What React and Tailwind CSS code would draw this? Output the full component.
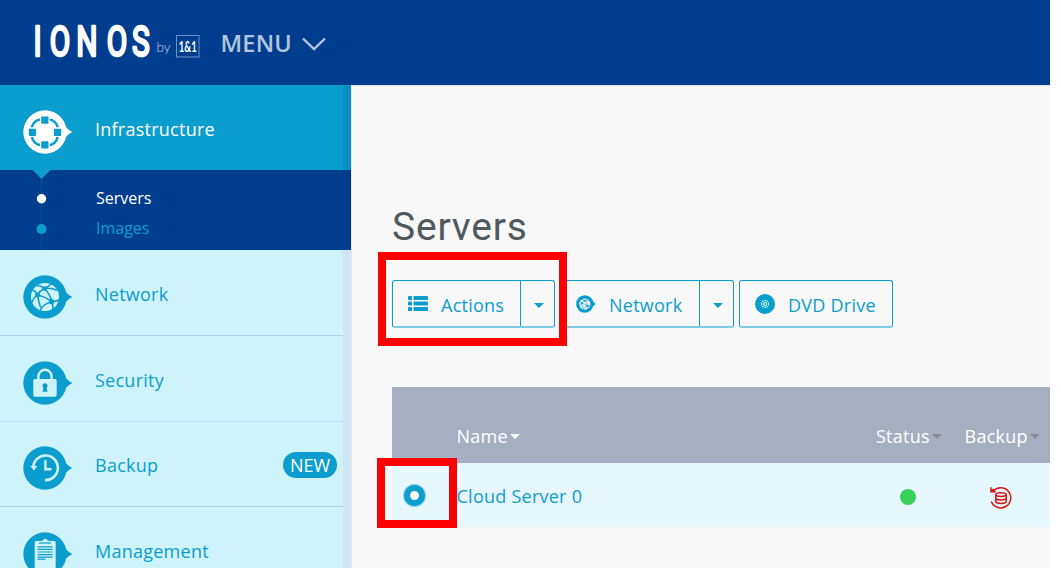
import React from "react";

const NAV = [
  { id: "network", label: "Network", icon: "globe", row: "h-[86px] border-[#a9d3ea]" },
  { id: "security", label: "Security", icon: "lock", row: "h-[86px] border-[#b8e0ee]" },
  { id: "backup", label: "Backup", icon: "history", badge: "NEW", row: "h-[85px] border-[#9fd2e8]", lift: "-mt-px" },
  { id: "management", label: "Management", icon: "clipboard", row: "h-[86px] border-[#a5d6ea]" },
];

function GlobeLines({ color }) {
  return (
    <>
      <circle cx="22" cy="22" r="14" fill="currentColor" />
      <g fill="none" stroke={color} strokeWidth="1.6" strokeLinecap="round">
        <path d="M14.5 20Q17 15.5 21.5 13.5 25.5 11.5 28 9M21.5 13.5Q17 10 13.5 10.5M21.5 13.5Q28 12.5 33.5 15" />
        <path d="M21.5 13.5Q27 19 28.7 26.7M14.5 20Q12.5 16 9.5 15M14.5 20Q9.5 24 9 27M14.5 20Q15.5 27 17.5 32" />
        <path d="M14.5 20Q22 21.5 28.7 26.7M28.7 26.7Q33 26.5 36 25M28.7 26.7Q20 29 17.5 35M28.7 26.7Q30.5 31 29.8 35" />
      </g>
      <g fill={color}>
        <circle cx="14.5" cy="20" r="2.5" />
        <circle cx="21.5" cy="13.5" r="2.3" />
        <circle cx="28.7" cy="26.7" r="2.6" />
      </g>
    </>
  );
}

function Glyph({ name }) {
  if (name === "infra") {
    return (
      <>
        <rect x="9" y="9.4" width="25.6" height="25.6" rx="9" fill="none" stroke="#0b9dcd" strokeWidth="2.5" />
        <path d="M21.8 5v34M5 22.2h34" stroke="white" strokeWidth="9.8" />
        <g fill="#0b9dcd">
          <rect x="18.2" y="6.4" width="7.3" height="7.3" rx="0.8" />
          <rect x="18.2" y="31.3" width="7.3" height="7.3" rx="0.8" />
          <rect x="5.8" y="18.8" width="7.3" height="7.3" rx="0.8" />
          <rect x="30.9" y="18.8" width="7.3" height="7.3" rx="0.8" />
        </g>
      </>
    );
  }
  if (name === "globe") {
    return (
      <g className="text-[#cef3fa]">
        <GlobeLines color="#0b9dcd" />
      </g>
    );
  }
  if (name === "lock") {
    return (
      <>
        <path d="M15.4 19v-3.6a6.6 6.6 0 0 1 13.2 0V19" fill="none" stroke="#cef3fa" strokeWidth="2.4" />
        <rect x="10.3" y="18" width="23.4" height="17.8" rx="1.8" fill="#cef3fa" />
        <circle cx="22" cy="24.8" r="2.5" fill="#0b9dcd" />
        <path d="M21 25h2.2l1.3 5.8h-4.9z" fill="#0b9dcd" />
      </>
    );
  }
  if (name === "history") {
    return (
      <>
        <path d="M10.3 21A12.3 12.3 0 1 1 22 34.1" fill="none" stroke="#cef3fa" strokeWidth="2.6" />
        <path d="M7.2 20h7.2l-3.4 4.6z" fill="#cef3fa" />
        <path d="M22.4 14.2v9h6" fill="none" stroke="#cef3fa" strokeWidth="2.4" />
      </>
    );
  }
  return (
    <>
      <rect x="11.7" y="9" width="21" height="29" rx="1.5" fill="#cef3fa" />
      <path d="M16 11h12" stroke="#0b9dcd" strokeWidth="1.2" />
      <path d="M17 9.5 20 8.3a2.3 2.3 0 0 1 4.4 0l3 1.2z" fill="#cef3fa" />
      <path d="M14.5 14.8h15M14.5 17.4h15M14.5 20h15M14.5 22.6h15M14.5 25.2h15M14.5 27.2h8" stroke="#0b9dcd" strokeWidth="1.2" />
    </>
  );
}

// round badge with the small pointer on its right side
function NavIcon({ name, light }) {
  return (
    <svg
      width="50"
      height="44"
      viewBox="0 0 50 44"
      className={light ? "shrink-0 text-white" : "shrink-0 text-[#0b9dcd]"}
    >
      <circle cx="22" cy="22" r="21.7" fill="currentColor" />
      <path d="M42 16.5Q46 20.5 49.3 22 46 23.5 42 27.5z" fill="currentColor" />
      <Glyph name={name} />
    </svg>
  );
}

function Logo() {
  return (
    <svg width="170" height="50" viewBox="34 20 170 50" className="shrink-0 overflow-visible">
      <g
        transform="scale(0.7 1)"
        fill="white"
        stroke="white"
        strokeWidth="2.7"
        strokeLinejoin="round"
        fontFamily="Roboto, sans-serif"
        fontWeight="400"
        fontSize="42.5"
      >
        <text x="47.8 71 109 152.5 188.5" y="56.5">IONOS</text>
      </g>
      <text x="156.5" y="51.5" fill="#c3d2e6" fontFamily="Lato, sans-serif" fontWeight="300" fontSize="13.5">by</text>
      <rect x="176.5" y="35.5" width="22.5" height="21.5" fill="none" stroke="#6b93c4" />
      <text x="178.7" y="51.7" fill="white" fontFamily="Lato, sans-serif" fontWeight="700" fontSize="14.5" textLength="18" lengthAdjust="spacingAndGlyphs">1&amp;1</text>
    </svg>
  );
}

function Header() {
  return (
    <header className="h-[85px] shrink-0 bg-[#003d8f] flex pl-[34px] pt-5">
      <Logo />
      <div className="flex items-start ml-[16.5px] text-[#b2c5dd]">
        <span className="text-[23.5px] leading-[46px] font-semibold tracking-[0.2px] w-[80px]">MENU</span>
        <svg width="26" height="16" viewBox="0 0 26 16" className="mt-4">
          <path d="M2 2.5 13 13 24 2.5" fill="none" stroke="currentColor" strokeWidth="2.4" />
        </svg>
      </div>
    </header>
  );
}

function Sidebar() {
  return (
    <aside className="relative w-[351px] shrink-0 bg-[#cef3fa] text-[18px] tracking-[0.25px] text-[#0b9dcd] overflow-hidden">
      <div className="h-[85px] bg-[#0b9dcd] text-white flex items-start pl-[22.5px]">
        <div className="pt-[25px]">
          <NavIcon name="infra" light />
        </div>
        <span className="ml-[22.5px] leading-[88px]">Infrastructure</span>
      </div>

      <div className="relative z-10 h-20 bg-[#003d8f] flex text-base tracking-normal">
        <svg width="96" height="80" viewBox="0 0 96 80" className="shrink-0">
          <path d="M41.5 8v72" stroke="#0d4f8c" />
          <path d="M32.5 0h18L41.5 9z" fill="#0b9dcd" />
          <circle cx="41.5" cy="28.7" r="4.7" fill="white" />
          <circle cx="41.5" cy="59" r="5" fill="#0b9dcd" />
        </svg>
        <div className="flex flex-col pt-[13px] leading-[30px]">
          <span className="text-white">Servers</span>
          <span>Images</span>
        </div>
      </div>

      {NAV.map((item) => (
        <div key={item.id} className={`flex items-start pl-[22.5px] border-b ${item.row}`}>
          <div className={`flex flex-1 items-start ${item.lift ?? ""}`}>
            <div className="pt-[25px]">
              <NavIcon name={item.icon} />
            </div>
            <span className="ml-[22.5px] leading-[88px]">{item.label}</span>
            {item.badge && (
              <span className="ml-auto mr-3.5 mt-[31px] w-[54px] h-[26px] rounded-full bg-[#0b9dcd] text-white text-center leading-[27px] tracking-normal">
                {item.badge}
              </span>
            )}
          </div>
        </div>
      ))}

      {/* scrollbar gutter */}
      <div className="absolute right-0 inset-y-0 w-2">
        <div className="h-[85px] bg-[#0a8fc5]" />
        <div className="h-20" />
        <div className="h-[324px] bg-[#cfe5f3]" />
      </div>
    </aside>
  );
}

function Caret({ className }) {
  return (
    <svg width="10" height="5" viewBox="0 0 10 5" className={className}>
      <path d="M0 0h10L5 5z" fill="currentColor" />
    </svg>
  );
}

function ListIcon() {
  return (
    <svg width="20" height="15" viewBox="0 0 20 15" className="shrink-0" fill="currentColor">
      {[0, 5.5, 11].map((y) => (
        <g key={y}>
          <rect x="0" y={y} width="4" height="4" rx="0.8" />
          <rect x="5.5" y={y} width="14.5" height="4" rx="0.8" />
        </g>
      ))}
    </svg>
  );
}

function SmallGlobe() {
  return (
    <svg width="20" height="18" viewBox="0 0 50 44" className="shrink-0">
      <circle cx="22" cy="22" r="21.7" fill="#0b9dcd" />
      <path d="M41 15 49.5 22 41 29z" fill="#0b9dcd" />
      <g className="text-[#f8f8f8]">
        <GlobeLines color="#0b9dcd" />
      </g>
    </svg>
  );
}

function DiscIcon() {
  return (
    <svg width="20" height="20" viewBox="0 0 20 20" className="shrink-0">
      <circle cx="10" cy="10" r="10" fill="#0b9dcd" />
      <circle cx="10" cy="10" r="3.6" fill="none" stroke="#d5eef6" strokeWidth="0.9" />
      <circle cx="10" cy="10" r="1.5" fill="none" stroke="white" strokeWidth="1" />
    </svg>
  );
}

function ToolButton({ icon, label, width, split }) {
  return (
    <div className="flex h-12 border border-b-2 border-[#0b9dcd] border-b-[#7fcce3] rounded-[3px] text-[18px] tracking-[0.25px] text-[#0b9dcd]">
      <button className={`flex items-center gap-[13px] pl-[15px] ${width}`}>
        {icon}
        <span className="pt-[3px]">{label}</span>
      </button>
      {split && (
        <button className="w-[34px] border-l border-[#0b9dcd] flex items-center justify-center">
          <Caret className="mt-1 ml-0.5" />
        </button>
      )}
    </div>
  );
}

function BackupIcon() {
  return (
    <svg width="22" height="23" viewBox="0 0 22 23" fill="none" stroke="#d6140f" strokeWidth="1.5">
      <path d="M3.2 5A10.1 10.1 0 1 1 1.3 15.5" />
      <path d="M1 1.2v4.6h4.8M1 5.6 3.8 3" />
      <ellipse cx="11" cy="8.6" rx="5.2" ry="1.9" />
      <path d="M5.8 8.6v6.9c0 2.5 10.4 2.5 10.4 0V8.6M5.8 12c0 2.5 10.4 2.5 10.4 0" />
    </svg>
  );
}

function ServerTable() {
  return (
    <div className="relative mt-[59px] w-[658px] text-[18px] tracking-[0.25px]">
      <div className="h-[76px] bg-[#a5afc0] text-white flex pt-9 pl-[64.5px] leading-[26px]">
        <div className="w-[419.5px] flex items-start">
          Name
          <Caret className="ml-[2.5px] mt-[11px]" />
        </div>
        <div className="w-[88.5px] flex items-start">
          Status
          <Caret className="ml-[2px] mt-[11px] text-[#858b91]" />
        </div>
        <div className="flex items-start">
          Backup
          <Caret className="ml-[2px] mt-[11px] text-[#858b91]" />
        </div>
      </div>
      <div className="h-16 bg-[#e6f8fd] text-[#0b9dcd] flex items-center">
        <span className="ml-[12px] size-[21px] rounded-full border-[6px] border-[#0b9dcd] bg-white shadow-[0_0_0_1px_#8cd0e4]" />
        <span className="ml-[31.5px] w-[443.5px] pt-[2px]">Cloud Server 0</span>
        <span className="size-4 rounded-full bg-[#39cf5a] mt-1" />
        <span className="ml-[74px] mt-1">
          <BackupIcon />
        </span>
      </div>
      {/* highlight around the row selector */}
      <div className="absolute -left-[15px] top-[71px] w-20 h-[70px] border-8 border-[#ff0000]" />
    </div>
  );
}

export default function App() {
  return (
    <div className="w-[1061px] h-[574px] bg-white overflow-hidden font-['Open_Sans',sans-serif]">
      <div className="w-[1050px] h-[568px] flex flex-col overflow-hidden bg-[#f8f8f8]">
        <Header />
        <div className="flex flex-1 min-h-0">
          <Sidebar />
          <main className="flex-1 min-w-0 border-l border-t border-[#e3e6ee] pl-10 pt-[115px]">
            <h1 className="h-[52px] leading-[52px] text-[39px] tracking-[0.8px] text-[#50595d] font-['Roboto',sans-serif]">
              Servers
            </h1>
            <div className="relative flex gap-[5px] mt-[27px]">
              <ToolButton icon={<ListIcon />} label="Actions" width="w-[127px]" split />
              <ToolButton icon={<SmallGlobe />} label="Network" width="w-[138px]" split />
              <ToolButton icon={<DiscIcon />} label="DVD Drive" width="w-[152px]" />
              {/* highlight around the Actions menu */}
              <div className="absolute -left-[14px] -top-7 w-[189px] h-[94px] border-8 border-[#ff0000]" />
            </div>
            <ServerTable />
          </main>
        </div>
      </div>
    </div>
  );
}
